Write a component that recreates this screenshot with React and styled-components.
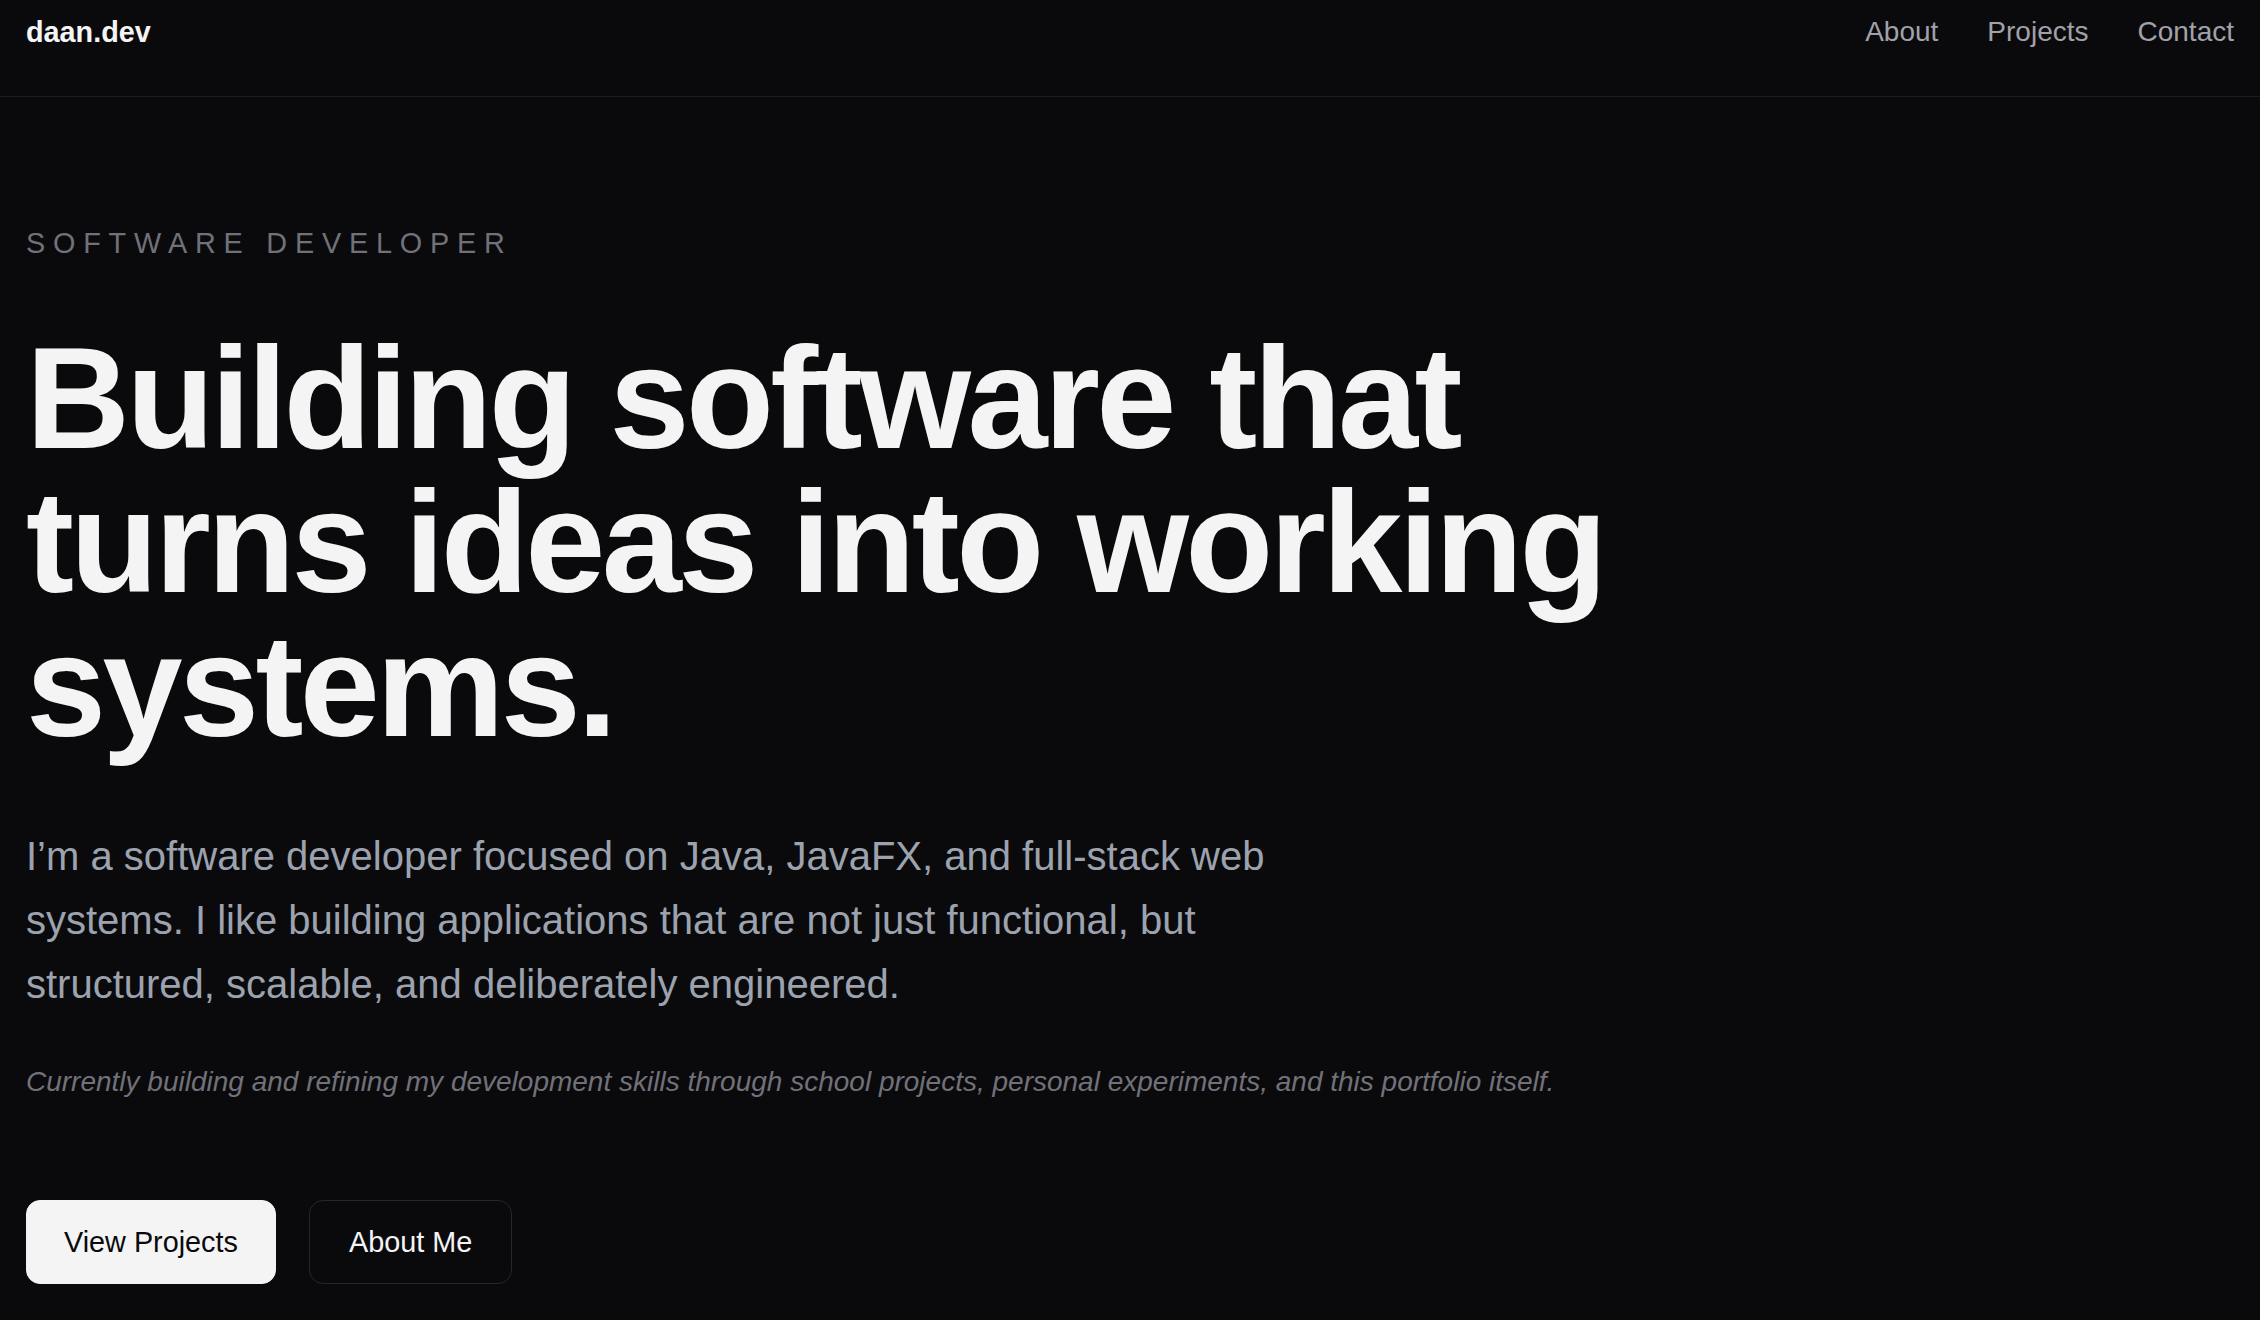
import React from 'react';
import styled, { createGlobalStyle } from 'styled-components';

const GlobalStyle = createGlobalStyle`
  html, body {
    margin: 0;
    padding: 0;
    background: #0a0a0c;
  }
  body {
    font-family: "Liberation Sans", Arial, sans-serif;
    color: #f4f4f5;
  }
  * { box-sizing: border-box; }
`;

const Page = styled.div`
  min-height: 1320px;
  background: #0a0a0c;
`;

const Header = styled.header`
  height: 97px;
  padding: 12px 26px 0;
  display: flex;
  justify-content: space-between;
  align-items: flex-start;
  border-bottom: 1px solid #1c1c1f;
`;

const Logo = styled.a`
  font-size: 28.8px;
  line-height: 40px;
  font-weight: 700;
  color: #f4f4f5;
  text-decoration: none;
`;

const Nav = styled.nav`
  display: flex;
  gap: 49px;
`;

const NavLink = styled.a`
  font-size: 28px;
  line-height: 40px;
  color: #a1a1aa;
  text-decoration: none;
`;

const Hero = styled.main`
  padding: 126px 26px 0;
  display: flex;
  flex-direction: column;
  align-items: flex-start;
`;

const Eyebrow = styled.p`
  margin: 0;
  font-size: 28.8px;
  line-height: 40px;
  letter-spacing: 7.8px;
  color: #71717a;
  text-transform: uppercase;
`;

const Title = styled.h1`
  margin: 64px 0 0;
  font-size: 144px;
  line-height: 144px;
  font-weight: 700;
  letter-spacing: -3.6px;
  color: #f4f4f5;
  max-width: 1640px;
`;

const Lead = styled.p`
  margin: 65px 0 0;
  font-size: 40px;
  line-height: 64px;
  color: #9ca3af;
  max-width: 1290px;
`;

const Note = styled.p`
  margin: 45px 0 0;
  font-size: 28px;
  line-height: 42px;
  font-style: italic;
  color: #71717a;
`;

const Actions = styled.div`
  margin-top: 97px;
  display: flex;
  gap: 33px;
`;

const Button = styled.a`
  display: inline-flex;
  align-items: center;
  justify-content: center;
  height: 84px;
  padding: 0 ${p => (p.$primary ? '37px' : '39px')};
  border-radius: 14px;
  font-size: 28.8px;
  text-decoration: none;
  border: 1.5px solid ${p => (p.$primary ? '#f4f4f5' : '#27272a')};
  background: ${p => (p.$primary ? '#f4f4f5' : 'transparent')};
  color: ${p => (p.$primary ? '#0a0a0c' : '#f4f4f5')};
`;

export default function App() {
  return (
    <Page>
      <GlobalStyle />
      <Header>
        <Logo href="#">daan.dev</Logo>
        <Nav>
          <NavLink href="#about">About</NavLink>
          <NavLink href="#projects">Projects</NavLink>
          <NavLink href="#contact">Contact</NavLink>
        </Nav>
      </Header>
      <Hero>
        <Eyebrow>Software Developer</Eyebrow>
        <Title>Building software that turns ideas into working systems.</Title>
        <Lead>
          I’m a software developer focused on Java, JavaFX, and full-stack web
          systems. I like building applications that are not just functional, but
          structured, scalable, and deliberately engineered.
        </Lead>
        <Note>
          Currently building and refining my development skills through school projects, personal experiments, and this portfolio itself.
        </Note>
        <Actions>
          <Button $primary href="#projects">View Projects</Button>
          <Button href="#about">About Me</Button>
        </Actions>
      </Hero>
    </Page>
  );
}
